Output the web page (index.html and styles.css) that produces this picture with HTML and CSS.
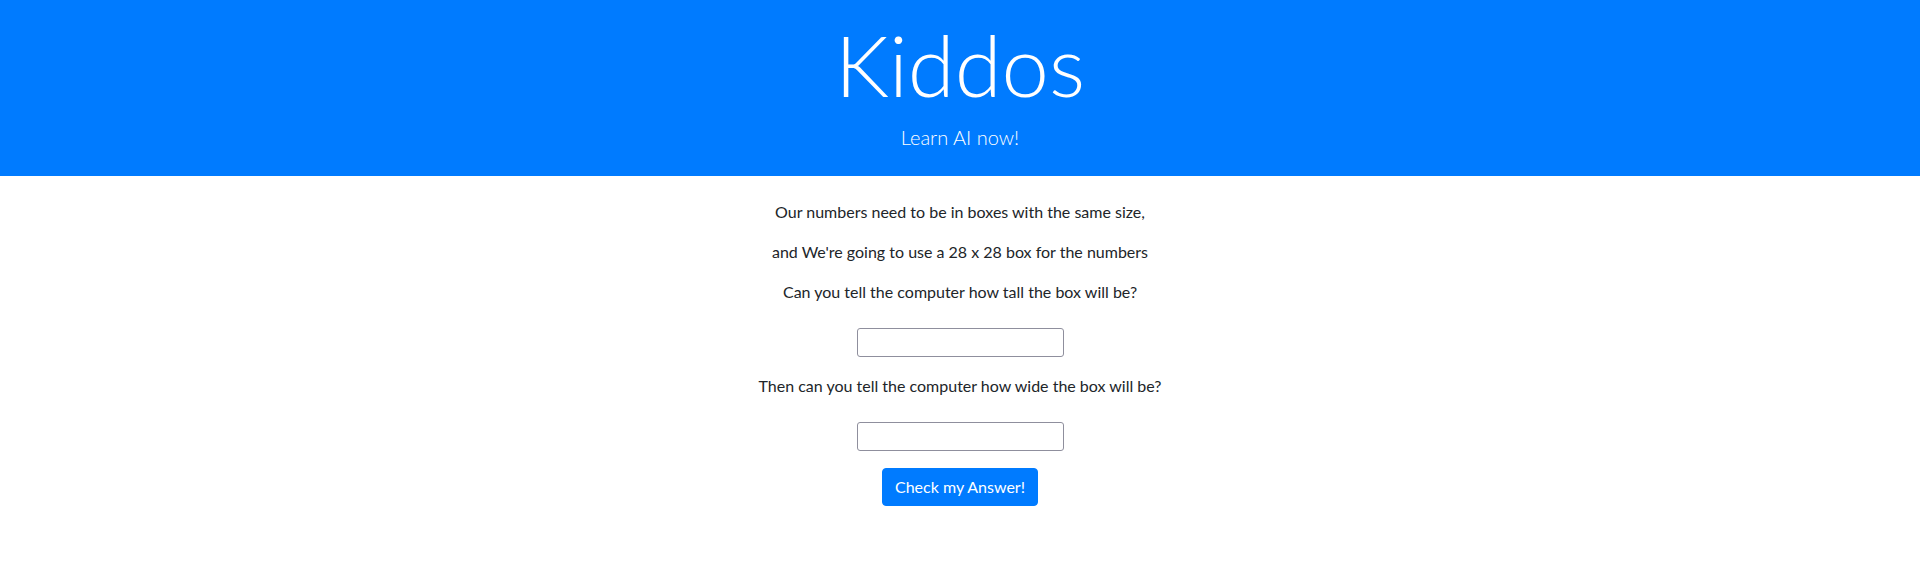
FILE: index.html
```html
<!DOCTYPE html>
<html lang="en">
  <head>
    <meta charset="UTF-8" />
    <meta name="viewport" content="width=device-width, initial-scale=1.0" />
    <title>Kiddos</title>
    <link rel="stylesheet" href="styles.css">
  </head>
  <body>
    <div class="jumbotron">
      <h1 class="brand">Kiddos</h1>
      <p class="lead">Learn AI now!</p>
    </div>

    <div class="lesson">
      <p>Our numbers need to be in boxes with the same size,</p>
      <p>and We're going to use a 28 x 28 box for the numbers</p>
      <p>Can you tell the computer how tall the box will be?</p>
      <input type="text" id="boxHeight" class="answer" />
      <p>Then can you tell the computer how wide the box will be?</p>
      <input type="text" id="boxWidth" class="answer" />
      <button id="checkAnswer" class="btn">Check my Answer!</button>
    </div>
  </body>
</html>
```

FILE: styles.css
```css
body {
  margin: 0;
  font-family: Lato, "Open Sans", sans-serif;
  font-size: 16px;
  line-height: 1.5;
  color: #212529;
  background-color: #fff;
}

.jumbotron {
  background-color: #007bff;
  color: #fff;
  height: 176px;
  box-sizing: border-box;
  padding-top: 22px;
  text-align: center;
}

.brand {
  font-size: 85px;
  font-weight: 300;
  line-height: 1;
  margin: 0;
}

.lead {
  font-size: 20px;
  font-weight: 300;
  line-height: 1;
  margin: 20px 0 0 0;
}

.lesson {
  display: flex;
  flex-direction: column;
  align-items: center;
  padding-top: 24px;
}

.lesson p {
  margin: 0 0 16px 0;
}

.answer {
  width: 207px;
  height: 29px;
  box-sizing: border-box;
  margin: 8px 0 17px 0;
  padding: 1px 2px;
  border: 1px solid #8f8f9d;
  border-radius: 3px;
  font-family: inherit;
  font-size: inherit;
  background-color: #fff;
}

.btn {
  margin: 0;
  padding: 6px 12px;
  height: 38px;
  box-sizing: border-box;
  font-family: inherit;
  font-size: 16px;
  line-height: 1.5;
  color: #fff;
  background-color: #007bff;
  border: 1px solid #007bff;
  border-radius: 4px;
  cursor: pointer;
}

.btn:hover {
  background-color: #0069d9;
  border-color: #0062cc;
}
```
